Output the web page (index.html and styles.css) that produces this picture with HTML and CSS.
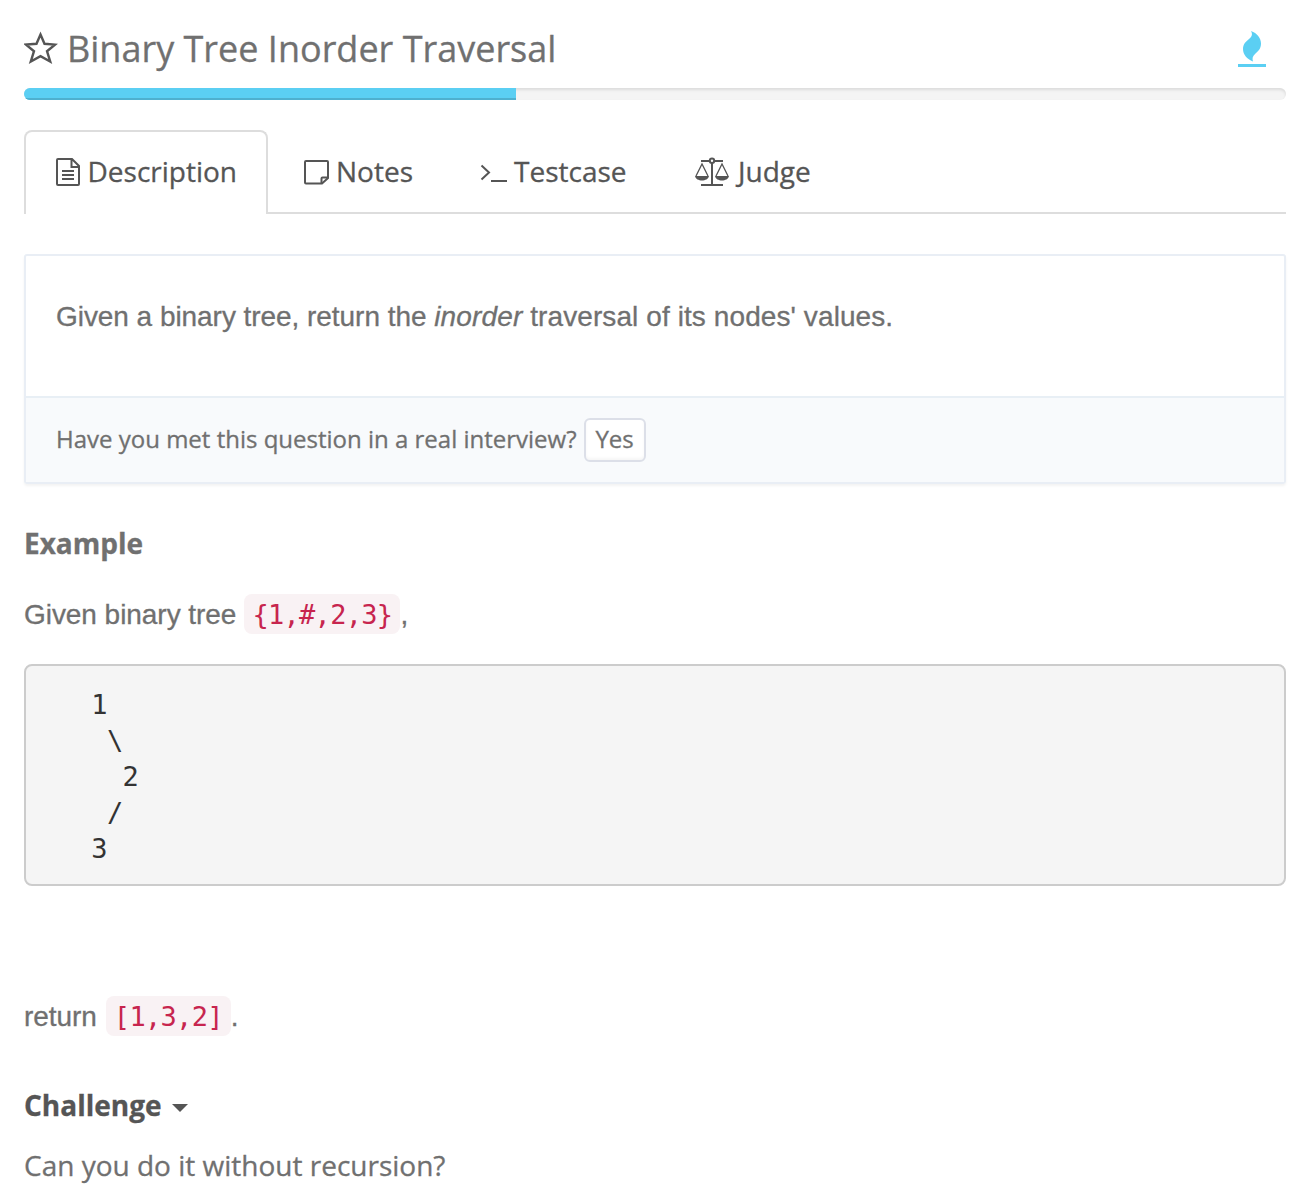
FILE: index.html
```html
<!DOCTYPE html>
<html lang="en">
<head>
<meta charset="utf-8">
<title>Binary Tree Inorder Traversal</title>
<link rel="stylesheet" href="styles.css">
</head>
<body>
<main class="page">
  <header class="header">
    <svg class="star" width="34" height="34" viewBox="0 0 34 34"><path d="M16.500 3.600 20.500 12.800 31 13.600 23 20.200 26.200 30.500 16.500 25.200 6.800 30.500 10 20.200 2 13.600 12.500 12.800Z"/></svg>
    <h1 class="title">Binary Tree Inorder Traversal</h1>
    <svg class="flame" width="28" height="36" viewBox="0 0 28 36"><path d="M13 0C19 2 23 7 23 12.500C23 17.500 20.500 20 17.500 22.500C14.500 25 14 27.500 15 30.500C9 28 5 23.500 5 18C5 13 8 10.500 11 8C14.500 5 14.500 3 13 0Z"/><path d="M0 33H28V36H0Z"/></svg>
  </header>
  <div class="progress"><div class="progress-bar" style="width:492px"></div></div>

  <nav class="tabs">
    <a class="tab tab-active">
      <svg width="24" height="28" viewBox="0 0 24 28"><path d="M2 1H16L23 8V26Q23 27 22 27H2Q1 27 1 26V2Q1 1 2 1ZM15.500 1V9H23M6 13H18M6 17H18M6 21H18"/></svg>
      <span class="label-description">Description</span>
    </a>
    <a class="tab tab-notes">
      <svg width="25" height="25" viewBox="0 0 25 25"><path d="M2 1H23Q24 1 24 2V18L18 23.500H2Q1 23.500 1 22.500V2Q1 1 2 1Z"/><path d="M17.500 23V18.500Q17.500 17.500 18.500 17.500H23.500"/></svg>
      <span class="label-notes">Notes</span>
    </a>
    <a class="tab tab-testcase">
      <svg width="28" height="20" viewBox="0 0 28 20"><path d="M1.500 2.500 9 9.500 1.500 16.500M11 18H27"/></svg>
      <span class="label-testcase">Testcase</span>
    </a>
    <a class="tab tab-judge">
      <svg width="34" height="29" viewBox="0 0 34 29"><path d="M6 4H14M20 4H28M17 6V28M6 28H28"/><circle cx="17" cy="3.700" r="2.200"/><path class="thin" d="M1 19 7 7 13 19M21 19 27 7 33 19"/><path class="solid" d="M0 19H14C13 25 1 25 0 19ZM20 19H34C33 25 21 25 20 19Z"/></svg>
      <span class="label-judge">Judge</span>
    </a>
  </nav>

  <section class="panel">
    <p class="statement">Given a binary tree, return the <em>inorder</em><span class="statement-end"> traversal of its nodes' values.</span></p>
    <div class="panel-footer"><span class="question">Have you met this question in a real interview?</span><button class="yes">Yes</button></div>
  </section>

  <h2 class="heading">Example</h2>
  <p class="line"><span class="given">Given binary tree</span><code class="code">{1,#,2,3}</code>,</p>
  <pre class="tree">   1
    \
     2
    /
   3</pre>
  <p class="line line-return"><span class="return">return</span><code class="code">[1,3,2]</code>.</p>
  <h2 class="heading heading-challenge">Challenge <svg class="caret" width="16" height="8" viewBox="0 0 16 8"><path d="M0 0H16L8 8Z"/></svg></h2>
  <p class="challenge">Can you do it without recursion?</p>
</main>
</body>
</html>
```
FILE: styles.css
```css
* { box-sizing: border-box; }
body { margin: 0; background: #fff; color: #707070; font-family: "Open Sans", sans-serif; -webkit-text-stroke: .3px; }
h1, h2, p, pre { margin: 0; }
.page { height: 1192px; padding: 0 22px 0 24px; overflow: hidden; }
.header { display: flex; height: 88px; align-items: flex-start; }
.star { margin-top: 31px; fill: none; stroke: #555; stroke-width: 2.4; }
.title { flex: 1; margin: 24px 0 0 9px; font-size: 36px; font-weight: 400; line-height: 50px; }
.flame { margin: 31px 20px 0 0; fill: #5bcff3; }
.progress { height: 12px; border-radius: 6px; overflow: hidden; background: #f4f4f4; box-shadow: inset 0 2px 3px rgba(0,0,0,.1); }
.progress-bar { height: 12px; background: #5bcff3; box-shadow: inset 0 -2px 0 #4eb0cf; }

.tabs { display: flex; height: 84px; margin-top: 30px; color: #555; font-size: 28px; line-height: 82px; background: linear-gradient(#ddd, #ddd) 0 82px / 100% 2px no-repeat; }
.tab { display: flex; height: 84px; padding-bottom: 2px; align-items: center; }
.tab svg { flex: none; fill: none; stroke: #555; stroke-width: 2; }
.tab .thin { stroke-width: 1.3; }
.tab .solid { fill: #555; stroke: none; }
.tab-active { width: 244px; padding: 0 0 2px 30px; border: 2px solid #ddd; border-bottom: 0; border-radius: 8px 8px 0 0; background: #fff; line-height: 78px; }
.label-description { margin-left: 7.5px; padding-bottom: 2px; }
.tab-notes { width: 176px; padding-left: 36px; }
.tab-notes svg { margin-top: 2px; }
.label-notes { margin-left: 7px; }
.tab-testcase { width: 216px; padding-left: 36px; }
.tab-testcase svg { margin-top: 4px; }
.label-testcase { margin-left: 6px; }
.tab-judge { padding-left: 35px; }
.tab-judge svg { margin-top: 1px; }
.label-judge { margin-left: 9px; }

.panel { height: 230px; margin-top: 40px; border: 2px solid #e9eef5; border-radius: 3px; box-shadow: 0 2px 3px rgba(0,0,0,.05); }
.statement { height: 140px; padding: 41px 30px 0; font: 28px/40px "Liberation Sans", sans-serif; letter-spacing: -.05px; white-space: nowrap; }
.statement em { letter-spacing: .15px; }
.statement-end { letter-spacing: .09px; }
.panel-footer { display: flex; height: 86px; padding: 0 30px; align-items: center; border-top: 2px solid #e8eff5; background: #f8fafc; font-size: 24px; }
.question { padding-bottom: 3px; }
.yes { width: 62px; height: 44px; margin-left: 7px; padding: 0 0 2px; border: 2px solid #dcdfe8; border-radius: 6px; background: #fff; box-shadow: inset 0 -2px 3px rgba(0,0,0,.04); color: #707070; font: 24px/38px "Open Sans", sans-serif; -webkit-text-stroke: .3px; }

.heading { height: 40px; margin-top: 40px; font-size: 28px; font-weight: 700; line-height: 38px; }
.line { display: flex; height: 40px; margin-top: 30px; font: 28px/42px "Liberation Sans", sans-serif; letter-spacing: -.05px; }
.code { height: 40px; margin-left: 8px; padding: 0 8px; border-radius: 8px; background: #f9f2f4; color: #c7254e; font: 27px/41px "DejaVu Sans Mono", monospace; letter-spacing: -.7px; -webkit-text-stroke: 0; }
.tree { height: 222px; margin-top: 30px; padding: 21px 18.5px 0; border: 2px solid #ccc; border-radius: 8px; background: #f5f5f5; color: #333; font: 27px/36px "DejaVu Sans Mono", monospace; letter-spacing: -.65px; -webkit-text-stroke: 0; }
.line-return { margin-top: 110px; }
.return { margin-right: 1px; }
.heading-challenge { display: flex; margin-top: 50px; color: #555; }
.caret { margin: 18px 0 0 10px; fill: #555; }
.challenge { margin-top: 20px; font-size: 28px; line-height: 38px; }
```
